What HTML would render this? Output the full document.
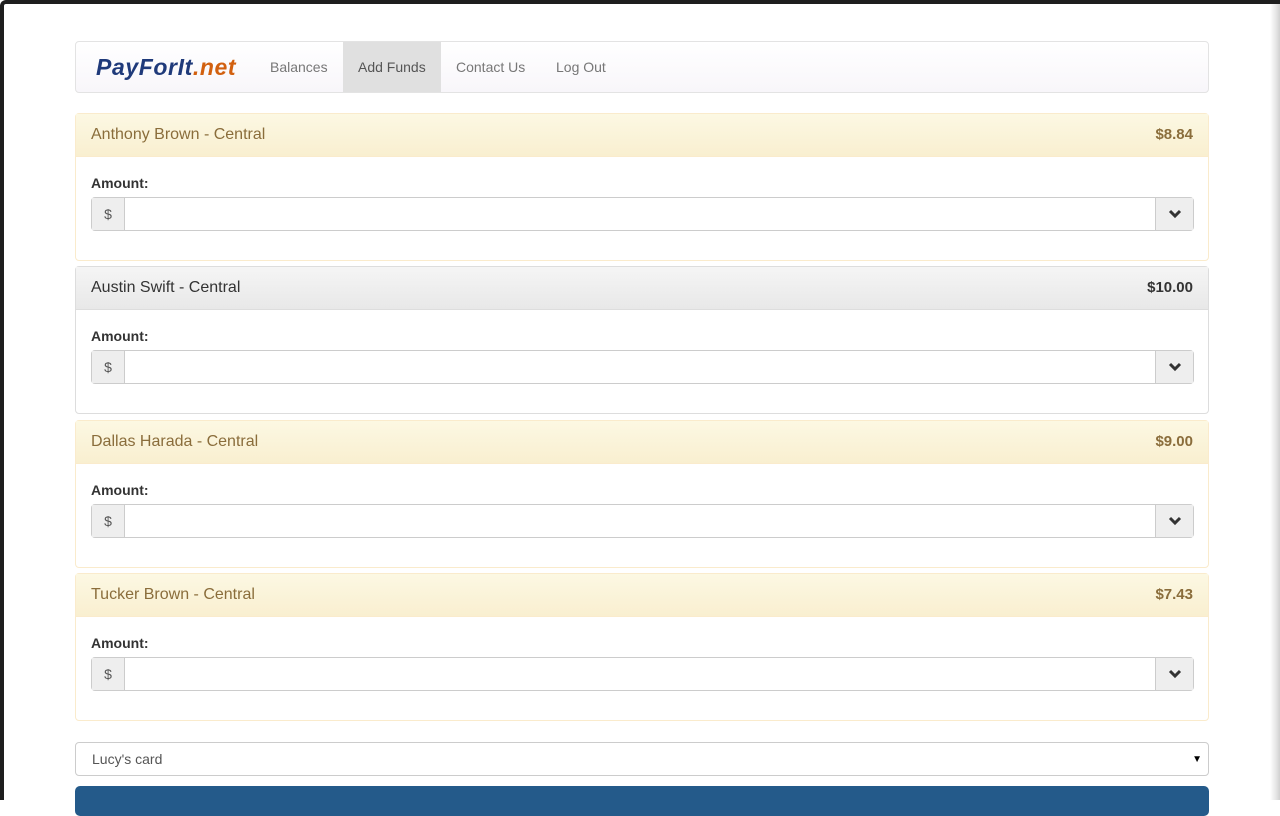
<!DOCTYPE html>
<html><head><style>
*{box-sizing:border-box}
body{margin:0;width:1280px;height:800px;overflow:hidden;background:#fff;font-family:"Liberation Sans",sans-serif;font-size:14px;color:#333;position:relative}
.frame{position:absolute;left:0;top:0;width:1280px;height:800px;border-top:4px solid #1e1e1e;border-left:4px solid #1e1e1e;border-top-left-radius:6px;pointer-events:none}
.rs{position:absolute;right:0;top:0;width:10px;height:800px;background:linear-gradient(to right,#fff,#e6e6e6 60%,#d0d0d0)}
.nav{position:absolute;left:75px;top:41px;width:1134px;height:52px;border:1px solid #e3e3e3;border-radius:4px;background:linear-gradient(#fff,#f8f6fa)}
.logo{position:absolute;left:20px;top:12px;font-size:23px;font-weight:bold;font-style:italic;color:#1f3a7a;letter-spacing:0.6px}
.logo span{color:#d2600f}
.nl{position:absolute;top:0;height:50px;line-height:50px;color:#777;font-size:14px;padding:0 15px}
.act{background:#e0e0e0;color:#555}
.p{position:absolute;left:75px;width:1134px;height:148px;border:1px solid #faebcc;border-radius:4px}
.p.d{border-color:#ddd}
.h{height:43px;background:linear-gradient(#fcf8e3,#f9efd0);color:#8a6d3b;font-size:16px;padding:0 15px;line-height:42px;border-bottom:1px solid #faebcc}
.d .h{background:linear-gradient(#f5f5f5,#e8e8e8);color:#333;border-color:#ddd}
.h b{float:right;font-size:15px}
.lab{position:absolute;left:15px;top:61px;font-weight:bold;font-size:14px}
.ig{position:absolute;left:15px;top:83px;width:1103px;height:34px;border:1px solid #ccc;border-radius:4px;display:flex}
.ad{width:33px;background:#eee;border-right:1px solid #ccc;text-align:center;line-height:32px;color:#555}
.in{flex:1}
.bt{width:38px;background:#eee;border-left:1px solid #ccc;display:flex;align-items:center;justify-content:center}
.sel{position:absolute;left:75px;top:742px;width:1134px;height:34px;border:1px solid #ccc;border-radius:4px;padding:0 16px;line-height:32px;color:#555}
.sel i{position:absolute;right:6px;top:1px;font-style:normal;font-size:10px;color:#000}
.btn{position:absolute;left:75px;top:786px;width:1134px;height:30px;background:#245a8a;border-radius:5px}
</style></head><body>
<div class="nav"><div class="logo">PayForIt<span>.net</span></div>
<div class="nl" style="left:179px">Balances</div>
<div class="nl act" style="left:267px;width:98px">Add Funds</div>
<div class="nl" style="left:365px">Contact Us</div>
<div class="nl" style="left:465px">Log Out</div></div>

<div class="p" style="top:113px"><div class="h">Anthony Brown - Central<b>$8.84</b></div><div class="lab">Amount:</div><div class="ig"><div class="ad">$</div><div class="in"></div><div class="bt"><svg width="14" height="10" viewBox="0 0 14 10"><path d="M2 2l5 5 5-5" stroke="#333" stroke-width="3" fill="none"/></svg></div></div></div>
<div class="p d" style="top:266px"><div class="h">Austin Swift - Central<b>$10.00</b></div><div class="lab">Amount:</div><div class="ig"><div class="ad">$</div><div class="in"></div><div class="bt"><svg width="14" height="10" viewBox="0 0 14 10"><path d="M2 2l5 5 5-5" stroke="#333" stroke-width="3" fill="none"/></svg></div></div></div>
<div class="p" style="top:420px"><div class="h">Dallas Harada - Central<b>$9.00</b></div><div class="lab">Amount:</div><div class="ig"><div class="ad">$</div><div class="in"></div><div class="bt"><svg width="14" height="10" viewBox="0 0 14 10"><path d="M2 2l5 5 5-5" stroke="#333" stroke-width="3" fill="none"/></svg></div></div></div>
<div class="p" style="top:573px"><div class="h">Tucker Brown - Central<b>$7.43</b></div><div class="lab">Amount:</div><div class="ig"><div class="ad">$</div><div class="in"></div><div class="bt"><svg width="14" height="10" viewBox="0 0 14 10"><path d="M2 2l5 5 5-5" stroke="#333" stroke-width="3" fill="none"/></svg></div></div></div>

<div class="sel">Lucy's card<i>▼</i></div>
<div class="btn"></div>
<div class="rs"></div>
<div class="frame"></div>
</body></html>
